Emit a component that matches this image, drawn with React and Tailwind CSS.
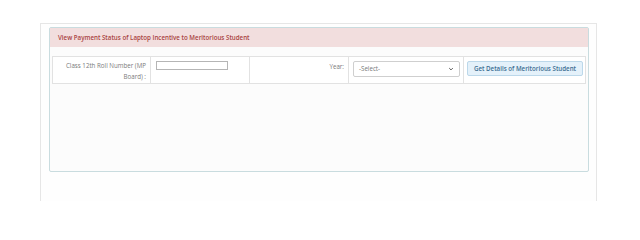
export default function App() {
  return (
    <div className="h-[201px] w-[640px] overflow-hidden bg-white pt-[23px] font-['Open_Sans',sans-serif]">
      <div className="ml-[40px] h-[200px] w-[557px] border border-[#e6e6e6] bg-[#fefefe] pl-[8px] pt-[3px]">
        <div className="w-[540px] rounded-[2px] border border-[#c9dcdf] bg-[#fcfcfc]">
          <div className="flex h-[19px] items-center bg-[#f2dede] pl-[8px] text-[6.2px] font-semibold text-[#a94442]">
            View Payment Status of Laptop Incentive to Meritorious Student
          </div>
          <div className="h-[124px] px-[2px] pt-[9px]">
            <table className="w-[534px] border-collapse text-[6.2px] text-[#555]">
              <tbody>
                <tr className="h-[27px] align-top">
                  <td className="w-[98px] border border-[#e2e2e2] bg-white pr-[4px] pt-[3px] text-right leading-[11px] text-[#7a7a7a]">
                    Class 12th Roll Number (MP Board) :
                  </td>
                  <td className="w-[99px] border border-[#e2e2e2] bg-white pl-[5px] pt-[4px]">
                    <input type="text" className="block h-[9px] w-[72px] border border-[#b5b5b5] bg-white" />
                  </td>
                  <td className="w-[99px] border border-[#e2e2e2] bg-white pr-[4px] pt-[4px] text-right leading-[11px] text-[#7a7a7a]">
                    Year:
                  </td>
                  <td className="w-[115px] border border-[#e2e2e2] bg-white pl-[4px] pt-[4px]">
                    <div className="flex h-[16px] w-[107px] items-center justify-between rounded-[2px] border border-[#cfcfcf] bg-white px-[5px] text-[#777]">
                      <span>-Select-</span>
                      <svg width="6" height="6" viewBox="0 0 10 10" fill="none" stroke="#555" strokeWidth="1.6">
                        <path d="M2 3.5 L5 6.5 L8 3.5" />
                      </svg>
                    </div>
                  </td>
                  <td className="border border-[#e2e2e2] bg-white pl-[3px] pt-[4px]">
                    <div className="flex h-[15px] w-[116px] items-center justify-center rounded-[2px] border border-[#bcd8ea] bg-[#e4f1fa] font-semibold text-[#3d6e92]">
                      Get Details of Meritorious Student
                    </div>
                  </td>
                </tr>
              </tbody>
            </table>
          </div>
        </div>
      </div>
    </div>
  );
}
